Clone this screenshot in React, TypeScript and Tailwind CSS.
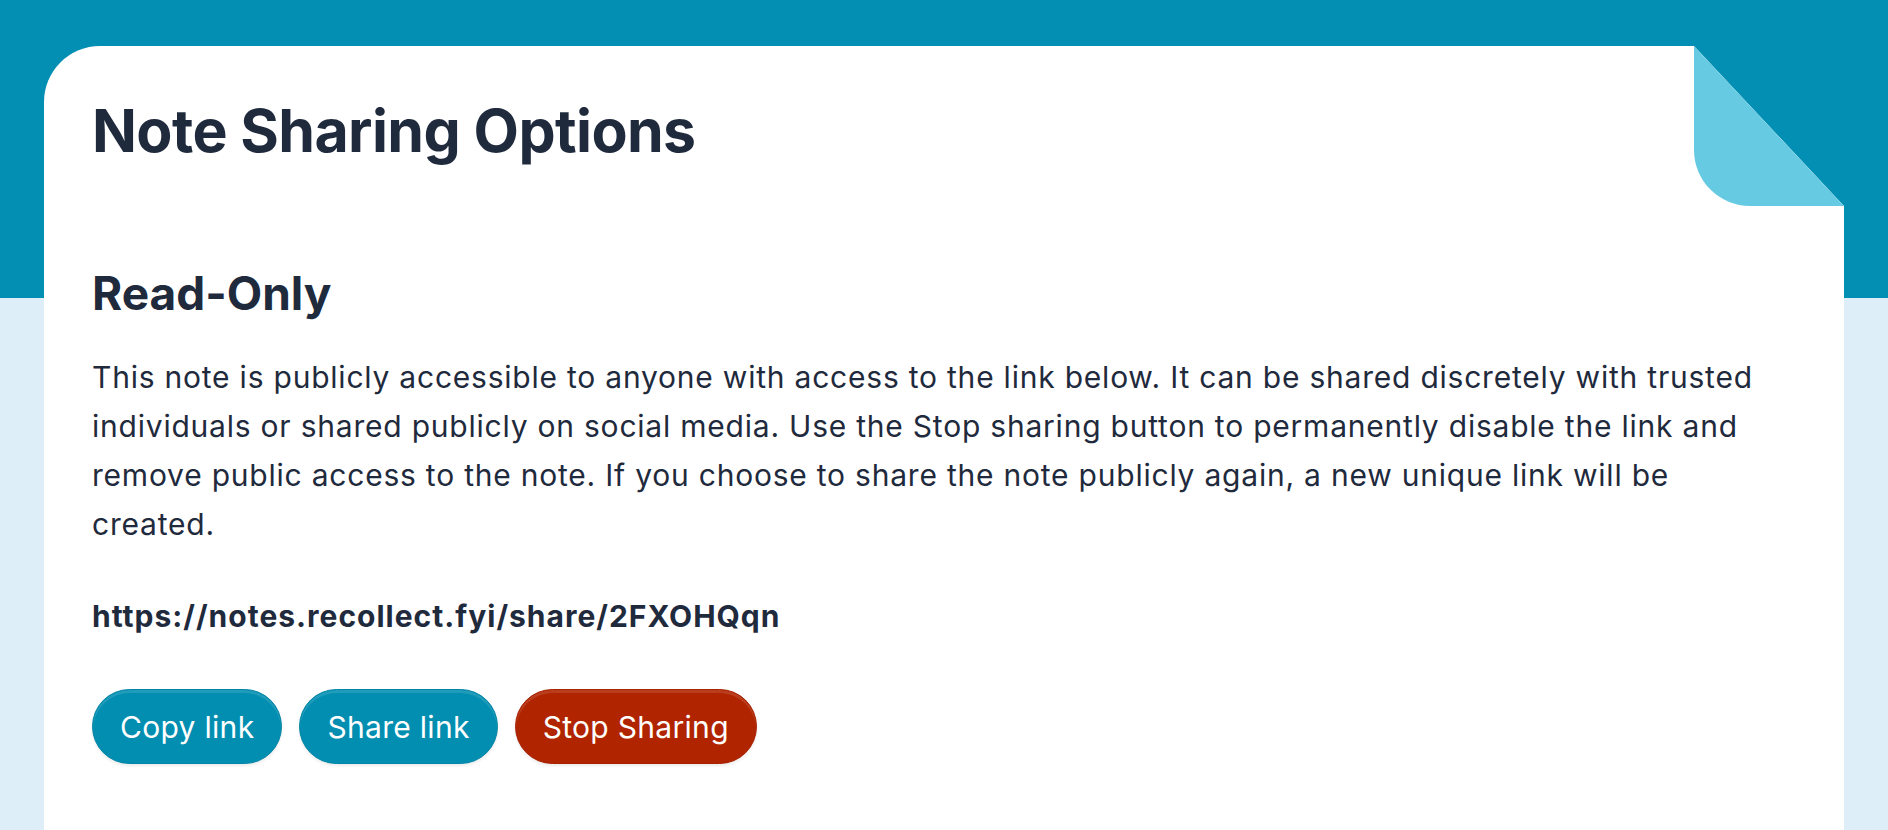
import React from 'react';

const shareUrl = 'https://notes.recollect.fyi/share/2FXOHQqn';

const PillButton: React.FC<{ label: string; danger?: boolean }> = ({ label, danger }) => (
  <button
    className={`h-[75px] rounded-full px-[27px] text-[30px] leading-none tracking-[0.3px] text-white border shadow-[inset_0_3px_0_rgba(255,255,255,0.12),0_2px_3px_rgba(0,0,0,0.08)] ${
      danger ? 'bg-[#b02400] border-[#a82200]' : 'bg-[#028eb1] border-[#0285a6]'
    }`}
  >
    {label}
  </button>
);

const App: React.FC = () => {
  return (
    <div className="h-[830px] overflow-hidden bg-[linear-gradient(to_bottom,#028fb3_298px,#deeef8_298px)] font-['Inter',sans-serif] text-[#1f2a3d]">
      <div className="pt-[46px] px-[44px]">
        <div className="relative min-h-[900px] bg-white rounded-tl-[56px] px-12 pt-[55px] [clip-path:polygon(0_0,calc(100%_-_150px)_0,100%_160px,100%_100%,0_100%)]">
          {/* folded corner */}
          <div className="absolute top-0 right-0 w-[150px] h-[160px] bg-[#66cae2] rounded-bl-[56px] [clip-path:polygon(0_0,100%_100%,0_100%)]" />

          <h1 className="text-[59px] leading-[60px] font-bold tracking-[-0.6px]">Note Sharing Options</h1>

          <h2 className="mt-[109px] text-[46px] leading-[46px] font-bold">Read-Only</h2>

          <p className="mt-[37px] max-w-[1680px] text-[30px] leading-[49px] tracking-[0.78px]">
            This note is publicly accessible to anyone with access to the link below. It can be shared discretely with
            trusted individuals or shared publicly on social media. Use the Stop sharing button to permanently disable the
            link and remove public access to the note. If you choose to share the note publicly again, a new unique link
            will be created.
          </p>

          <p className="mt-[48px] text-[30px] leading-[39px] font-bold tracking-[1px]">{shareUrl}</p>

          <div className="mt-[53px] flex gap-[17px]">
            <PillButton label="Copy link" />
            <PillButton label="Share link" />
            <PillButton label="Stop Sharing" danger />
          </div>
        </div>
      </div>
    </div>
  );
};

export default App;
